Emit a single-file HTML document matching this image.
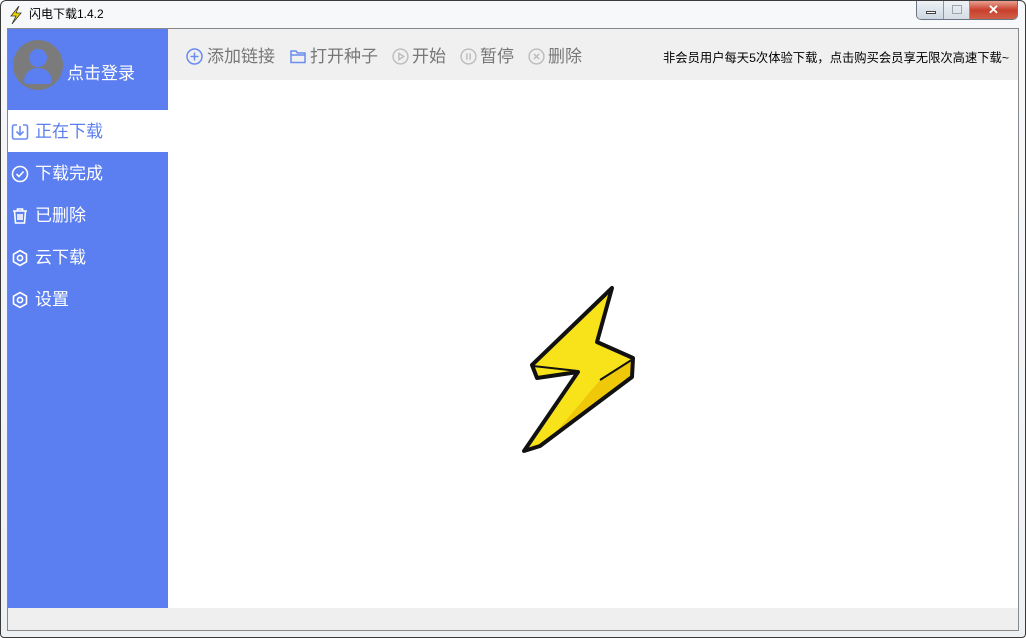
<!DOCTYPE html>
<html><head><meta charset="utf-8"><style>
*{margin:0;padding:0;box-sizing:border-box}
body{width:1026px;height:638px;overflow:hidden;font-family:"Liberation Sans","Noto Sans CJK SC",sans-serif;background:#fff;position:relative}
.frame{position:absolute;left:0;top:0;width:1026px;height:638px;border:1px solid #3a3a3a;border-radius:6px 6px 4px 4px;background:linear-gradient(#f6f8fa,#eef1f4)}
.client{position:absolute;left:7px;top:28px;width:1012px;height:603px;border:1px solid #888;background:#fff}
.side{position:absolute;left:8px;top:29px;width:160px;height:579px;background:#5b7ff0}
.tb{position:absolute;left:168px;top:29px;width:850px;height:51px;background:#f0f0f0}
.status{position:absolute;left:8px;top:608px;width:1010px;height:22px;background:#efefef}
.item{position:absolute;left:8px;width:160px;height:42px;color:#fff;font-size:17px;line-height:44px;padding-left:27px}
.item svg{position:absolute;left:3px;top:13px}
.tbi{position:absolute;top:45px;font-size:17px;color:#777;line-height:24px}
</style></head><body>
<div class="frame"></div>
<svg style="position:absolute;left:9px;top:6px" width="14" height="18" viewBox="0 0 14 18"><path d="M10 0 L2 10 L7 10 L3 18 L12 7 L7 7 Z" fill="#f5d800" stroke="#333" stroke-width="0.8"/></svg>
<div style="position:absolute;left:29px;top:5px;font-size:12px;color:#000">闪电下载1.4.2</div>
<div style="position:absolute;left:916px;top:1px;width:102px;height:19px;border:1px solid #6a7686;border-top:none;border-radius:0 0 5px 5px;overflow:hidden;display:flex">
<div style="width:27px;background:linear-gradient(#eef2f6,#cdd6e0);border-right:1px solid #8a96a6;position:relative"><div style="position:absolute;left:9px;top:10px;width:10px;height:3px;border:1px solid #444;background:#fff"></div></div>
<div style="width:26px;background:linear-gradient(#eef2f6,#d6dde6);border-right:1px solid #8a96a6;position:relative"><div style="position:absolute;left:8px;top:4px;width:10px;height:9px;border:1px solid #9aa;"></div></div>
<div style="flex:1;background:linear-gradient(#e8a090,#c8402c 50%,#d06048);color:#fff;font-weight:bold;text-align:center;font-size:13px;line-height:17px">✕</div>
</div>
<div class="client"></div>
<div class="side"></div>
<div class="tb"></div>
<div class="status"></div>
<div style="position:absolute;left:13px;top:40px;width:50px;height:50px;border-radius:50%;background:#7b7b7b;overflow:hidden">
<div style="position:absolute;left:16px;top:9px;width:18px;height:18px;border-radius:50%;background:#5b7ff0"></div>
<div style="position:absolute;left:11px;top:28px;width:28px;height:16px;border-radius:14px 14px 3px 3px;background:#5b7ff0"></div></div>
<div style="position:absolute;left:67px;top:59px;color:#fff;font-size:17px">点击登录</div>
<div class="item" style="top:110px;background:#fff;color:#5b7ff0"><svg width="18" height="18" viewBox="0 0 18 18" fill="none" stroke="#6a8cf0" stroke-width="1.6"><path d="M6 2H3a1.5 1.5 0 0 0-1.5 1.5v11A1.5 1.5 0 0 0 3 16h12a1.5 1.5 0 0 0 1.5-1.5v-11A1.5 1.5 0 0 0 15 2h-3M9 3v9M5.5 8.5 9 12l3.5-3.5"/></svg>正在下载</div>
<div class="item" style="top:152px"><svg width="18" height="18" viewBox="0 0 18 18" fill="none" stroke="#fff" stroke-width="1.6"><circle cx="9" cy="9" r="7.5"/><path d="M5.5 9l2.5 2.5 4.5-5"/></svg>下载完成</div>
<div class="item" style="top:194px"><svg width="18" height="18" viewBox="0 0 18 18" fill="none" stroke="#fff" stroke-width="1.6"><path d="M2 4h14M6.5 4V2h5v2M3.5 4l1 12h9l1-12M7 7v6M9 7v6M11 7v6"/></svg>已删除</div>
<div class="item" style="top:236px"><svg width="18" height="18" viewBox="0 0 18 18" fill="none" stroke="#fff" stroke-width="1.6"><path d="M9 1.5l6.5 3.75v7.5L9 16.5l-6.5-3.75v-7.5z"/><circle cx="9" cy="9" r="2.6"/></svg>云下载</div>
<div class="item" style="top:278px"><svg width="18" height="18" viewBox="0 0 18 18" fill="none" stroke="#fff" stroke-width="1.6"><path d="M9 1.5l6.5 3.75v7.5L9 16.5l-6.5-3.75v-7.5z"/><circle cx="9" cy="9" r="2.6"/></svg>设置</div>
<svg style="position:absolute;left:186px;top:48px" width="17" height="17" viewBox="0 0 17 17" fill="none" stroke="#6a8cf0" stroke-width="1.5"><circle cx="8.5" cy="8.5" r="7.5"/><path d="M8.5 4.5v8M4.5 8.5h8"/></svg>
<div class="tbi" style="left:207px">添加链接</div>
<svg style="position:absolute;left:290px;top:49px" width="16" height="15" viewBox="0 0 16 15" fill="none" stroke="#6a8cf0" stroke-width="1.5"><path d="M1 2h5l1.5 2H15v9.5H1z M1 6h14"/></svg>
<div class="tbi" style="left:310px">打开种子</div>
<svg style="position:absolute;left:392px;top:48px" width="17" height="17" viewBox="0 0 16 16" fill="none" stroke="#bbb" stroke-width="1.3"><circle cx="8" cy="8" r="7"/><path d="M6.5 5v6l4.5-3z"/></svg>
<div class="tbi" style="left:412px">开始</div>
<svg style="position:absolute;left:460px;top:48px" width="17" height="17" viewBox="0 0 16 16" fill="none" stroke="#bbb" stroke-width="1.3"><circle cx="8" cy="8" r="7"/><path d="M6.5 5v6M9.5 5v6"/></svg>
<div class="tbi" style="left:480px">暂停</div>
<svg style="position:absolute;left:528px;top:48px" width="17" height="17" viewBox="0 0 16 16" fill="none" stroke="#bbb" stroke-width="1.3"><circle cx="8" cy="8" r="7"/><path d="M5.5 5.5l5 5M10.5 5.5l-5 5"/></svg>
<div class="tbi" style="left:548px">删除</div>
<div style="position:absolute;left:663px;top:48px;font-size:12.3px;color:#000;white-space:nowrap">非会员用户每天5次体验下载，点击购买会员享无限次高速下载~</div>
<svg style="position:absolute;left:0;top:0" width="1026" height="638" viewBox="0 0 1026 638">
<path d="M612 288 L597 342 L633 358 L632 377 L540 446 L524 451 L578 372 L537 378 L532 365 Z" fill="#f8e31a"/>
<path d="M633 358 L632 377 L552 437 L600 380 Z" fill="#efc80a"/>
<path d="M612 288 L597 342 L633 358 L632 377 L540 446 L524 451 L578 372 L537 378 L532 365 Z" fill="none" stroke="#111" stroke-width="4" stroke-linejoin="round"/>
<path d="M533 366 L578 371 M600 380 L633 359" fill="none" stroke="#111" stroke-width="2"/>
</svg>
</body></html>
